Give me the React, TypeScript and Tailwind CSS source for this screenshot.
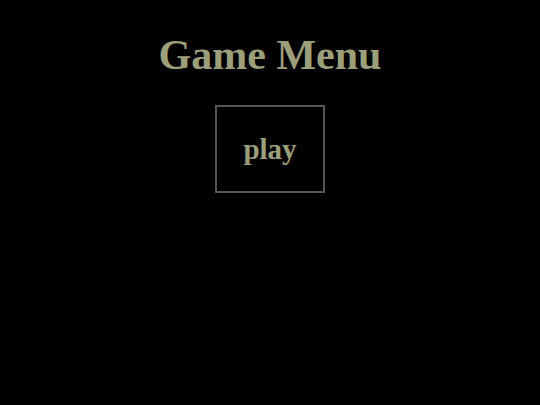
export default function App() {
  return (
    <div className="w-[540px] h-[405px] bg-black flex flex-col items-center" style={{ fontFamily: '"Liberation Serif", "Times New Roman", serif' }}>
      <h1 className="mt-[29px] text-[42px] leading-[52px] font-bold text-[#9b9f7a]">Game Menu</h1>
      <div className="mt-[24px] w-[110px] h-[88px] border-2 border-[#555555] flex items-center justify-center">
        <span className="text-[29px] leading-none font-bold text-[#9b9f7a] mt-[1px]">play</span>
      </div>
    </div>
  );
}
